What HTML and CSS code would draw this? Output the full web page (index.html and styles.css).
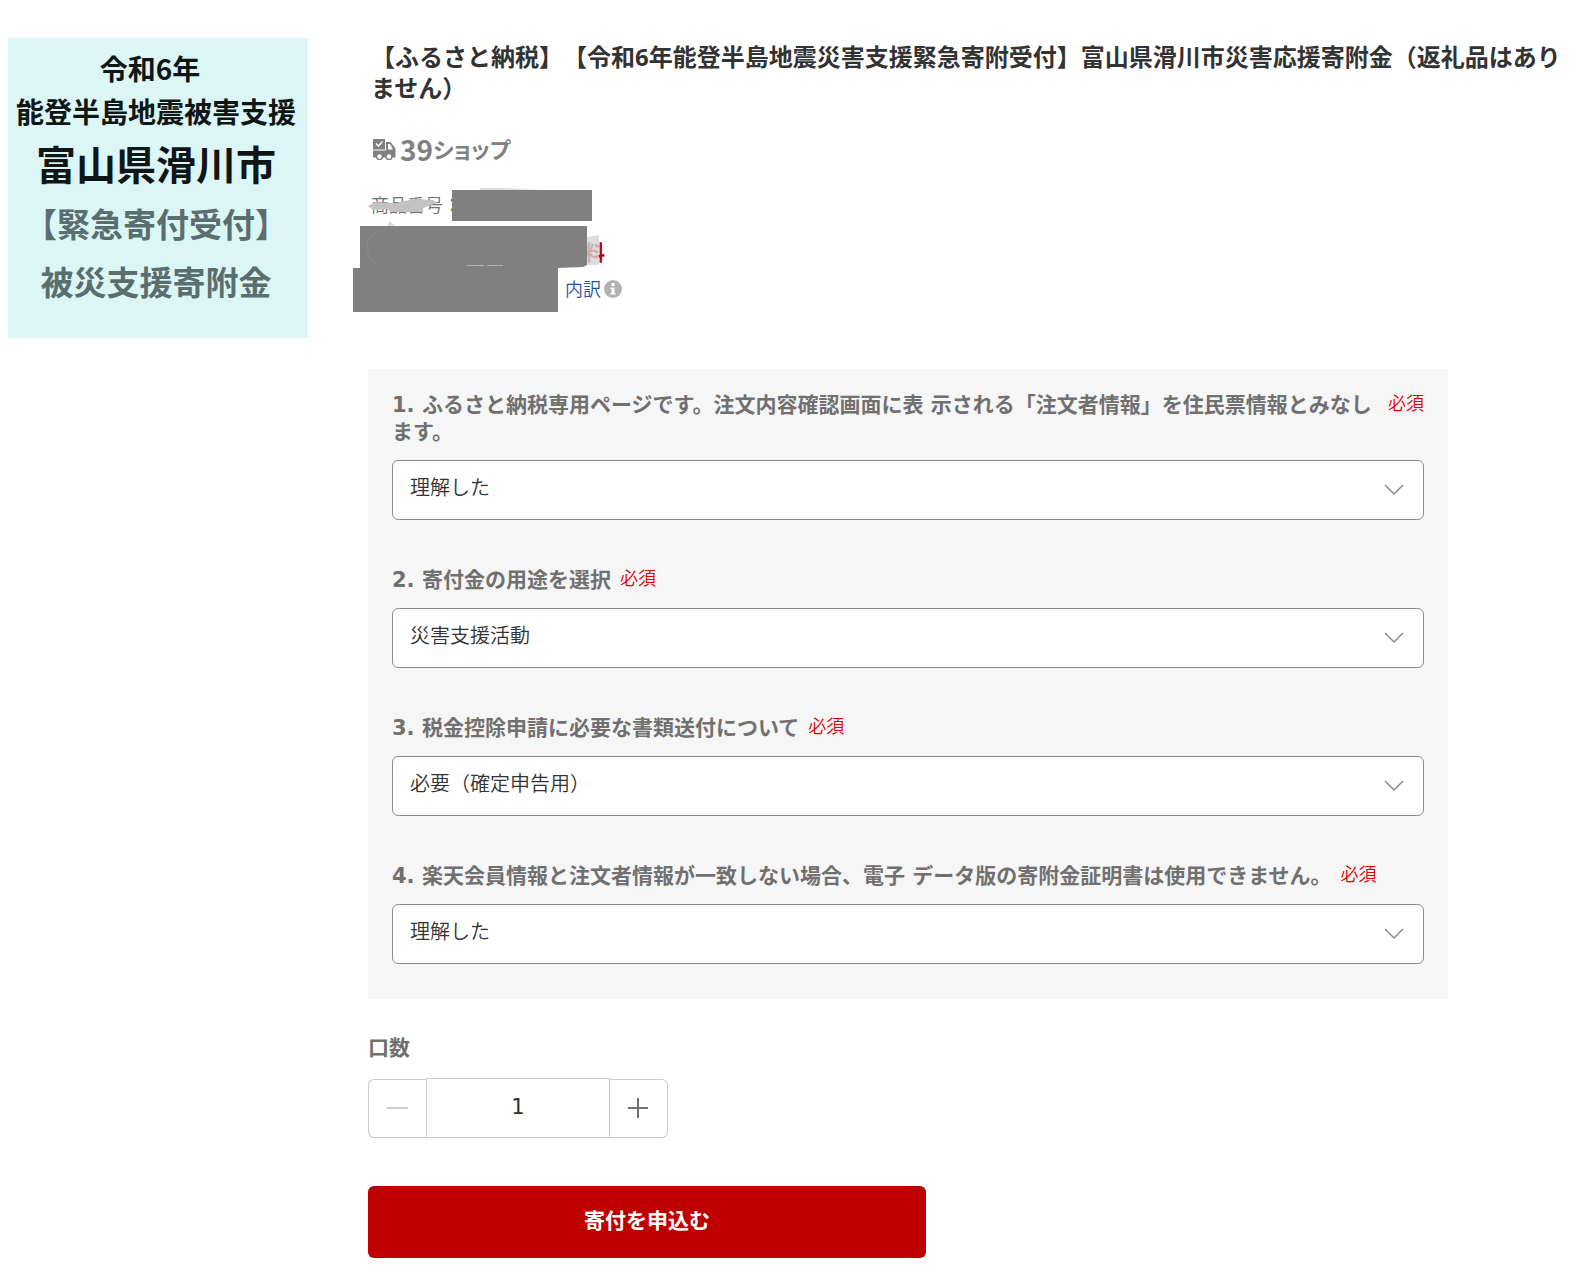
FILE: index.html
```html
<!DOCTYPE html>
<html lang="ja">
<head>
<meta charset="utf-8">
<meta name="viewport" content="width=device-width, initial-scale=1">
<title>富山県滑川市災害応援寄附金</title>
<link rel="stylesheet" href="styles.css">
</head>
<body>
<main class="page">
  <aside class="banner">
    <p class="banner-line banner-year">令和6年</p>
    <p class="banner-line banner-event">能登半島地震被害支援</p>
    <p class="banner-line banner-city">富山県滑川市</p>
    <p class="banner-line banner-note">【緊急寄付受付】</p>
    <p class="banner-line banner-fund">被災支援寄附金</p>
  </aside>

  <div class="content">
    <header class="summary">
      <h1 class="title">【ふるさと納税】【令和6年能登半島地震災害支援緊急寄附受付】富山県滑川市災害応援寄附金（返礼品はありません）</h1>
      <div class="shop">
        <svg class="shop-icon" width="23" height="21" viewBox="0 0 23 21" aria-hidden="true">
          <path fill="#808080" fill-rule="evenodd" d="M1 0H12V10.500H0V1Q0 0 1 0ZM2.500 5L5.500 8.200L10 2.800L8.900 1.900L5.400 6L3.600 4Z"/>
          <path fill="#808080" fill-rule="evenodd" d="M13 3H17.500L22.500 9.500V18.500H0V11.500H13ZM15 5V10.500H20L17 5Z"/>
          <circle cx="6.500" cy="17.500" r="3" fill="#fff" stroke="#808080" stroke-width="1.500"/>
          <circle cx="16" cy="17.500" r="3" fill="#fff" stroke="#808080" stroke-width="1.500"/>
        </svg>
        <span class="shop-number">39</span><span class="shop-name">ショップ</span>
      </div>
      <div class="details">
        <p class="item-number">商品番号：</p>
        <p class="shipping">料</p>
        <p class="breakdown"><a class="breakdown-link" href="#breakdown">内訳</a>
          <svg width="18" height="18" viewBox="0 0 18 18" role="img" aria-label="情報"><circle cx="9" cy="9" r="9" fill="#b3b3b3"/><path fill="#fff" d="M7.500 3H10.500V6H7.500ZM6.500 7.500H10.500V13H11.500V14.500H6.500V13H7.500V9H6.500Z"/></svg>
        </p>
        <svg class="masks" width="260" height="130" viewBox="0 0 260 130" aria-hidden="true">
          <path fill="#c3c3c3" d="M15 23L22 19L42 20L62 16L80 17L84 20L76 23L70 25L70 29L38 29L34 26L20 27Z"/>
          <path fill="#d4d4d4" d="M127 5L150 5L185 7V10H127ZM34 43L37 38L42 43ZM234 54L246 52V82H234Z" fill-opacity=".8"/>
          <path fill="#808080" d="M99 7H239V38H99ZM7 43H234V82L230 84L205 85V129H0V85H7Z"/>
          <path fill="none" stroke="#8a8a8a" d="M35 45Q14 50 14 62Q13 76 26 82"/>
          <path fill="none" stroke="#b0b0b0" d="M113 82.500H131M134 82.500H150"/>
        </svg>
      </div>
    </header>

    <form class="order">
      <div class="options">
        <div class="field">
          <div class="field-head"><label class="field-label" for="q1">1. ふるさと納税専用ページです。注文内容確認画面に表 示される「注文者情報」を住民票情報とみなします。</label><span class="required">必須</span></div>
          <div class="select-wrap">
            <select class="select" id="q1"><option>理解した</option></select>
            <svg class="chevron" width="20" height="12" viewBox="0 0 20 12" aria-hidden="true"><path d="M1 1L10 10L19 1"/></svg>
          </div>
        </div>
        <div class="field">
          <div class="field-head"><label class="field-label" for="q2">2. 寄付金の用途を選択</label><span class="required">必須</span></div>
          <div class="select-wrap">
            <select class="select" id="q2"><option>災害支援活動</option></select>
            <svg class="chevron" width="20" height="12" viewBox="0 0 20 12" aria-hidden="true"><path d="M1 1L10 10L19 1"/></svg>
          </div>
        </div>
        <div class="field">
          <div class="field-head"><label class="field-label" for="q3">3. 税金控除申請に必要な書類送付について</label><span class="required">必須</span></div>
          <div class="select-wrap">
            <select class="select" id="q3"><option>必要（確定申告用）</option></select>
            <svg class="chevron" width="20" height="12" viewBox="0 0 20 12" aria-hidden="true"><path d="M1 1L10 10L19 1"/></svg>
          </div>
        </div>
        <div class="field">
          <div class="field-head"><label class="field-label" for="q4">4. 楽天会員情報と注文者情報が一致しない場合、電子 データ版の寄附金証明書は使用できません。</label><span class="required">必須</span></div>
          <div class="select-wrap">
            <select class="select" id="q4"><option>理解した</option></select>
            <svg class="chevron" width="20" height="12" viewBox="0 0 20 12" aria-hidden="true"><path d="M1 1L10 10L19 1"/></svg>
          </div>
        </div>
      </div>

      <div class="quantity">
        <label class="field-label" for="units">口数</label>
        <div class="stepper">
          <button class="step step-minus" type="button" aria-label="減らす" disabled><svg width="22" height="22" viewBox="0 0 22 22" aria-hidden="true"><path d="M0 10H21"/></svg></button>
          <input class="units" id="units" type="text" inputmode="numeric" value="1">
          <button class="step step-plus" type="button" aria-label="増やす"><svg width="22" height="22" viewBox="0 0 22 22" aria-hidden="true"><path d="M0 10H20M10 0V20"/></svg></button>
        </div>
      </div>

      <button class="submit" type="submit">寄付を申込む</button>
    </form>
  </div>
</main>
</body>
</html>
```
FILE: styles.css
```css
* {
  box-sizing: border-box;
}

body {
  margin: 0;
  background: #fff;
  color: #333;
  font-family: "Noto Sans", "Noto Sans CJK JP", sans-serif;
  text-spacing-trim: space-all;
}

p,
h1 {
  margin: 0;
}

.page {
  display: grid;
  grid-template-columns: 300px minmax(0, 1fr);
  gap: 60px;
  align-items: start;
  padding: 38px 8px 28px;
}

/* Campaign banner */
.banner {
  padding: 9px 4px 29px 0;
  background: #dcf6f6;
  color: #101616;
  font-family: "Noto Sans CJK JP", sans-serif;
  font-weight: 700;
  white-space: nowrap;
}

.banner-line {
  display: flex;
  justify-content: center;
}

.banner-year {
  padding-right: 12px;
  font-size: 28px;
  line-height: 42px;
}

.banner-event {
  font-size: 28px;
  line-height: 44px;
}

.banner-city {
  font-size: 40px;
  line-height: 60px;
}

.banner-note,
.banner-fund {
  color: #5a6e6e;
  font-size: 33px;
}

.banner-note {
  line-height: 60px;
}

.banner-fund {
  line-height: 56px;
}

/* Product summary */
.summary {
  padding: 3px 0 0 3px;
}

.title {
  font-size: 24px;
  line-height: 31px;
  font-weight: 700;
}

.shop {
  display: flex;
  align-items: center;
  margin-top: 30px;
  color: #808080;
  font-weight: 700;
  line-height: 32px;
}

.shop-icon {
  margin: 0 4px 0 2px;
}

.shop-number {
  font-family: "Noto Sans CJK JP", sans-serif;
  font-size: 28px;
}

.shop-name {
  font-size: 22px;
  font-feature-settings: "palt";
}

.details {
  position: relative;
  margin-top: 28px;
  font-size: 18px;
  line-height: 24px;
}

.item-number {
  color: #707070;
  font-weight: 350;
}

.shipping {
  margin: 23px 0 0 213px;
  color: #bf0000;
  font-weight: 700;
  font-size: 21px;
}

.breakdown {
  display: flex;
  align-items: center;
  gap: 3px;
  margin: 13px 0 0 194px;
}

.breakdown-link {
  color: #1d54a7;
  font-weight: 350;
  text-decoration: none;
}

.masks {
  position: absolute;
  top: -10px;
  left: -18px;
}

/* Order form */
.order {
  max-width: 1080px;
  margin-top: 68px;
}

.options {
  display: grid;
  gap: 47px;
  padding: 23px 24px 35px;
  background: #f6f6f6;
}

.field {
  display: grid;
  gap: 14px;
}

.field-head {
  display: flex;
  align-items: flex-start;
  gap: 9px;
}

.field-label {
  color: #707070;
  font-family: "DejaVu Sans", "Noto Sans CJK JP", sans-serif;
  font-size: 21px;
  font-weight: 700;
  line-height: 27px;
}

.required {
  flex: none;
  color: #e00000;
  font-size: 18px;
  font-weight: 350;
  line-height: 23px;
}

.select-wrap {
  display: grid;
  align-items: center;
}

.select-wrap > * {
  grid-area: 1 / 1;
}

.select {
  appearance: none;
  width: 100%;
  height: 60px;
  padding: 0 56px 6px 17px;
  border: 1px solid #8c8c8c;
  border-radius: 6px;
  background: #fff;
  color: #333;
  font-family: inherit;
  font-size: 20px;
  font-weight: 350;
}

.chevron {
  justify-self: end;
  margin-right: 20px;
  fill: none;
  stroke: #8c8c8c;
  stroke-width: 1.5;
  pointer-events: none;
}

.quantity {
  display: grid;
  gap: 16px;
  margin-top: 36px;
}

.stepper {
  display: grid;
  grid-template-columns: 58px 184px 58px;
  height: 60px;
}

.step {
  display: grid;
  place-items: center;
  margin-top: 1px;
  padding: 0;
  border: 1px solid #ccc;
  background: #fff;
  fill: none;
  stroke: #707070;
  stroke-width: 2;
}

.step-minus {
  border-right: 0;
  border-radius: 6px 0 0 6px;
  stroke: #ccc;
}

.step-plus {
  border-left: 0;
  border-radius: 0 6px 6px 0;
}

.units {
  width: 100%;
  padding: 0 0 2px;
  border: 1px solid #ccc;
  color: #333;
  font-family: "DejaVu Sans", sans-serif;
  font-size: 21px;
  text-align: center;
}

.submit {
  display: block;
  width: 558px;
  max-width: 100%;
  height: 72px;
  margin-top: 48px;
  padding: 0 0 6px;
  border: 0;
  border-radius: 6px;
  background: #bf0000;
  color: #fff;
  font-family: inherit;
  font-size: 21px;
  font-weight: 700;
}
```
